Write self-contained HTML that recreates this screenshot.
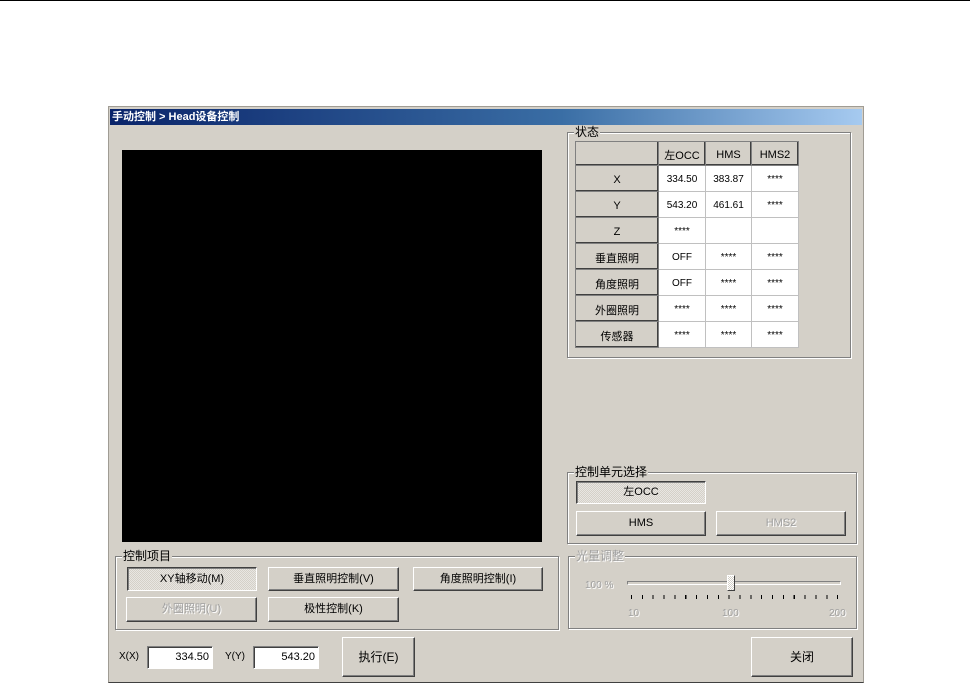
<!DOCTYPE html><html><head><meta charset="utf-8"><style>
*{box-sizing:border-box;margin:0;padding:0}
body{width:970px;height:683px;background:#fff;position:relative;overflow:hidden;font-family:"Liberation Sans","Noto Sans CJK SC",sans-serif;font-size:11px;color:#000}
.a{position:absolute}
.win{left:108px;top:106px;width:756px;height:577px;background:#d4d0c8;border:1px solid #a09c94;border-bottom:1px solid #404040}
.title{left:110px;top:109px;width:752px;height:16px;background:linear-gradient(90deg,#0a246a,#3a6ea5 60%,#a6caf0);color:#fff;font-weight:bold;font-size:11px;line-height:16px;padding-left:2px}
.grp{border:1px solid #808080;box-shadow:1px 1px 0 #fff inset,1px 1px 0 #fff}
.lg{position:absolute;top:-8px;left:6px;background:#d4d0c8;padding:0 1px;font-size:12px;line-height:14px}
.btn{background:#d4d0c8;border:1px solid;border-color:#fff #404040 #404040 #fff;box-shadow:inset -1px -1px 0 #808080;text-align:center;font-size:11px}
.dis{color:#a0a0a0;text-shadow:1px 1px 0 #fff}
.pressed{background:repeating-conic-gradient(#e8e6e2 0 25%,#d4d0c8 0 50%) 0 0/2px 2px;border-color:#404040 #fff #fff #404040;box-shadow:inset 1px 1px 0 #808080}
table{border-collapse:collapse;background:#fff}
td{border:1px solid #c0c0c0;text-align:center;font-size:10px;height:26px;padding:2px 0 0;vertical-align:middle}
td.h{background:#d4d0c8;border:1px solid #808080;box-shadow:inset -1px -1px 0 #404040;font-size:11px}
.inp{background:#fff;border:1px solid;border-color:#808080 #fff #fff #808080;box-shadow:inset 1px 1px 0 #404040;text-align:right;padding-right:3px;line-height:20px}
</style></head><body>
<div class="a" style="left:0;top:0;width:970px;height:1px;background:#000"></div>
<div class="a win"></div>
<div class="a title">手动控制 &gt; Head设备控制</div>
<div class="a" style="left:122px;top:150px;width:420px;height:392px;background:#000"></div>

<div class="a grp" style="left:567px;top:132px;width:284px;height:226px"><span class="lg" style="left:6px">状态</span></div>
<table class="a" style="left:575px;top:141px;width:224px;border:1px solid #808080">
<tr style="height:24px"><td class="h" style="width:83px;height:24px"></td><td class="h" style="width:47px;height:24px">左OCC</td><td class="h" style="width:46px;height:24px">HMS</td><td class="h" style="height:24px">HMS2</td></tr>
<tr><td class="h">X</td><td>334.50</td><td>383.87</td><td>****</td></tr>
<tr><td class="h">Y</td><td>543.20</td><td>461.61</td><td>****</td></tr>
<tr><td class="h">Z</td><td>****</td><td></td><td></td></tr>
<tr><td class="h">垂直照明</td><td>OFF</td><td>****</td><td>****</td></tr>
<tr><td class="h">角度照明</td><td>OFF</td><td>****</td><td>****</td></tr>
<tr><td class="h">外圈照明</td><td>****</td><td>****</td><td>****</td></tr>
<tr><td class="h">传感器</td><td>****</td><td>****</td><td>****</td></tr>
</table>

<div class="a grp" style="left:567px;top:472px;width:290px;height:72px"><span class="lg">控制单元选择</span></div>
<div class="a btn pressed" style="left:576px;top:481px;width:130px;height:23px;line-height:21px">左OCC</div>
<div class="a btn" style="left:576px;top:511px;width:130px;height:25px;line-height:23px">HMS</div>
<div class="a btn dis" style="left:716px;top:511px;width:130px;height:25px;line-height:23px">HMS2</div>

<div class="a grp" style="left:568px;top:556px;width:289px;height:73px"><span class="lg dis">光量调整</span></div>
<div class="a dis" style="left:585px;top:580px;font-size:10px">100 %</div>
<div class="a" style="left:627px;top:581px;width:214px;height:4px;border:1px solid;border-color:#808080 #fff #fff #808080;background:#d4d0c8"></div>
<div class="a" style="left:727px;top:575px;width:8px;height:16px;background:repeating-conic-gradient(#fff 0 25%,#d4d0c8 0 50%) 0 0/2px 2px;border:1px solid;border-color:#fff #404040 #404040 #fff"></div>
<div class="a" style="left:631px;top:595px;width:210px;height:4px;background:repeating-linear-gradient(90deg,#000 0 1px,transparent 1px 10.85px)"></div>
<div class="a dis" style="left:628px;top:608px;font-size:10px">10</div>
<div class="a dis" style="left:722px;top:608px;font-size:10px">100</div>
<div class="a dis" style="left:829px;top:608px;font-size:10px">200</div>

<div class="a grp" style="left:115px;top:556px;width:444px;height:74px"><span class="lg">控制项目</span></div>
<div class="a btn pressed" style="left:127px;top:567px;width:130px;height:24px;line-height:22px">XY轴移动(M)</div>
<div class="a btn" style="left:268px;top:567px;width:131px;height:24px;line-height:22px">垂直照明控制(V)</div>
<div class="a btn" style="left:413px;top:567px;width:130px;height:24px;line-height:22px">角度照明控制(I)</div>
<div class="a btn dis" style="left:126px;top:597px;width:131px;height:25px;line-height:23px">外圈照明(U)</div>
<div class="a btn" style="left:268px;top:597px;width:131px;height:25px;line-height:23px">极性控制(K)</div>

<div class="a" style="left:119px;top:651px;font-size:10px">X(X)</div>
<div class="a inp" style="left:147px;top:646px;width:66px;height:23px">334.50</div>
<div class="a" style="left:225px;top:651px;font-size:10px">Y(Y)</div>
<div class="a inp" style="left:253px;top:646px;width:66px;height:23px">543.20</div>
<div class="a btn" style="left:342px;top:637px;width:73px;height:40px;line-height:38px;font-size:12px">执行(E)</div>
<div class="a btn" style="left:751px;top:637px;width:102px;height:40px;line-height:38px;font-size:12px">关闭</div>
</body></html>
